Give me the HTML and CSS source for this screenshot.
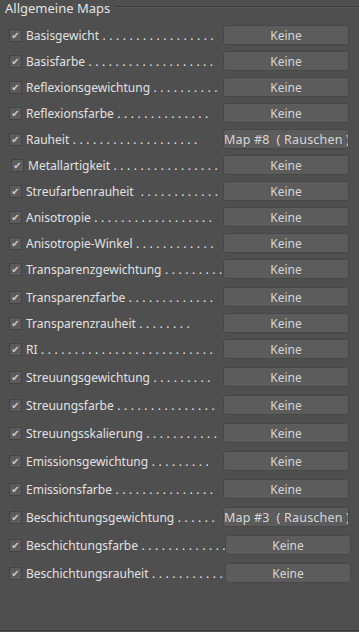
FILE: index.html
```html
<!DOCTYPE html>
<html lang="de">
<head>
  <meta charset="UTF-8">
  <meta name="viewport" content="width=device-width, initial-scale=1.0">
  <title>Allgemeine Maps</title>
  <link rel="stylesheet" href="styles.css">
</head>
<body>
  <div class="panel">
    <div class="group-title">
      <span>Allgemeine Maps</span>
      <div class="group-line"></div>
    </div>
    <div class="map-list">
      <div class="map-row"><span class="check">&#10004;</span><span class="label">Basisgewicht . . . . . . . . . . . . . . . . .</span><button class="map-btn">Keine</button></div>
      <div class="map-row"><span class="check">&#10004;</span><span class="label">Basisfarbe . . . . . . . . . . . . . . . . . . .</span><button class="map-btn">Keine</button></div>
      <div class="map-row"><span class="check">&#10004;</span><span class="label">Reflexionsgewichtung . . . . . . . . . .</span><button class="map-btn">Keine</button></div>
      <div class="map-row"><span class="check">&#10004;</span><span class="label">Reflexionsfarbe . . . . . . . . . . . . . .</span><button class="map-btn">Keine</button></div>
      <div class="map-row"><span class="check">&#10004;</span><span class="label">Rauheit . . . . . . . . . . . . . . . . . . .</span><button class="map-btn map-set">Map #8&nbsp; ( Rauschen )</button></div>
      <div class="map-row indent"><span class="check">&#10004;</span><span class="label">Metallartigkeit . . . . . . . . . . . . . . . .</span><button class="map-btn">Keine</button></div>
      <div class="map-row"><span class="check">&#10004;</span><span class="label">Streufarbenrauheit&nbsp; . . . . . . . . . . . .</span><button class="map-btn">Keine</button></div>
      <div class="map-row"><span class="check">&#10004;</span><span class="label">Anisotropie . . . . . . . . . . . . . . . . . .</span><button class="map-btn">Keine</button></div>
      <div class="map-row"><span class="check">&#10004;</span><span class="label">Anisotropie-Winkel . . . . . . . . . . . .</span><button class="map-btn">Keine</button></div>
      <div class="map-row"><span class="check">&#10004;</span><span class="label">Transparenzgewichtung . . . . . . . . .</span><button class="map-btn">Keine</button></div>
      <div class="map-row wide"><span class="check">&#10004;</span><span class="label">Transparenzfarbe . . . . . . . . . . . . .</span><button class="map-btn">Keine</button></div>
      <div class="map-row"><span class="check">&#10004;</span><span class="label">Transparenzrauheit . . . . . . . .</span><button class="map-btn">Keine</button></div>
      <div class="map-row"><span class="check">&#10004;</span><span class="label">RI . . . . . . . . . . . . . . . . . . . . . . . . . .</span><button class="map-btn">Keine</button></div>
      <div class="map-row wide"><span class="check">&#10004;</span><span class="label">Streuungsgewichtung . . . . . . . . .</span><button class="map-btn">Keine</button></div>
      <div class="map-row wide"><span class="check">&#10004;</span><span class="label">Streuungsfarbe . . . . . . . . . . . . . . .</span><button class="map-btn">Keine</button></div>
      <div class="map-row wide"><span class="check">&#10004;</span><span class="label">Streuungsskalierung . . . . . . . . . . .</span><button class="map-btn">Keine</button></div>
      <div class="map-row wide"><span class="check">&#10004;</span><span class="label">Emissionsgewichtung . . . . . . . . .</span><button class="map-btn">Keine</button></div>
      <div class="map-row wide"><span class="check">&#10004;</span><span class="label">Emissionsfarbe . . . . . . . . . . . . . . .</span><button class="map-btn">Keine</button></div>
      <div class="map-row wide"><span class="check">&#10004;</span><span class="label">Beschichtungsgewichtung . . . . . .</span><button class="map-btn map-set">Map #3&nbsp; ( Rauschen )</button></div>
      <div class="map-row wide shift"><span class="check">&#10004;</span><span class="label">Beschichtungsfarbe . . . . . . . . . . . . .</span><button class="map-btn">Keine</button></div>
      <div class="map-row wide shift"><span class="check">&#10004;</span><span class="label">Beschichtungsrauheit . . . . . . . . . . .</span><button class="map-btn">Keine</button></div>
    </div>
  </div>
</body>
</html>
```

FILE: styles.css
```css
body {
  margin: 0;
  background-color: #4f4f4f;
  font-family: "Noto Sans", "Open Sans", sans-serif;
  font-size: 12px;
  color: #e2e2e2;
}

.panel {
  height: 630px;
  border-bottom: 1px solid #3a3a3a;
  overflow: hidden;
}

.group-title {
  display: flex;
  align-items: center;
  height: 17px;
  padding-left: 5px;
  font-size: 13px;
  line-height: 17px;
}

.group-title span {
  white-space: nowrap;
}

.group-line {
  flex: 1;
  margin-left: 6px;
  margin-top: -3px;
  border-top: 1px solid #3b3b3b;
  border-bottom: 1px solid #575757;
}

.map-list {
  display: flex;
  flex-direction: column;
  padding-top: 8px;
}

.map-row {
  display: flex;
  align-items: center;
  height: 20px;
  margin-top: 6px;
}

.map-row:first-child {
  margin-top: 0;
}

.map-row.wide {
  margin-top: 8px;
}

.check {
  width: 11px;
  height: 11px;
  margin-left: 9px;
  margin-right: 4px;
  flex-shrink: 0;
  background-color: #5b5b5b;
  border: 1px solid #434343;
  color: #c9c9c9;
  font-size: 10px;
  line-height: 11px;
  text-align: center;
  font-family: "DejaVu Sans", sans-serif;
}

.indent .check {
  margin-left: 11px;
}

.label {
  flex: 1;
  white-space: nowrap;
  overflow: hidden;
  word-spacing: 0.4px;
}

.map-btn {
  width: 126px;
  height: 20px;
  margin-right: 10px;
  flex-shrink: 0;
  padding: 0;
  background-color: #5c5c5c;
  border: 1px solid #474747;
  border-radius: 3px;
  color: #d6d6d6;
  font-family: "Noto Sans", "Open Sans", sans-serif;
  font-size: 12px;
  line-height: 17px;
  text-align: center;
  white-space: nowrap;
  overflow: hidden;
}

.map-set {
  font-size: 12.5px;
  letter-spacing: 0.2px;
}

.shift .map-btn {
  margin-right: 8px;
}
```
